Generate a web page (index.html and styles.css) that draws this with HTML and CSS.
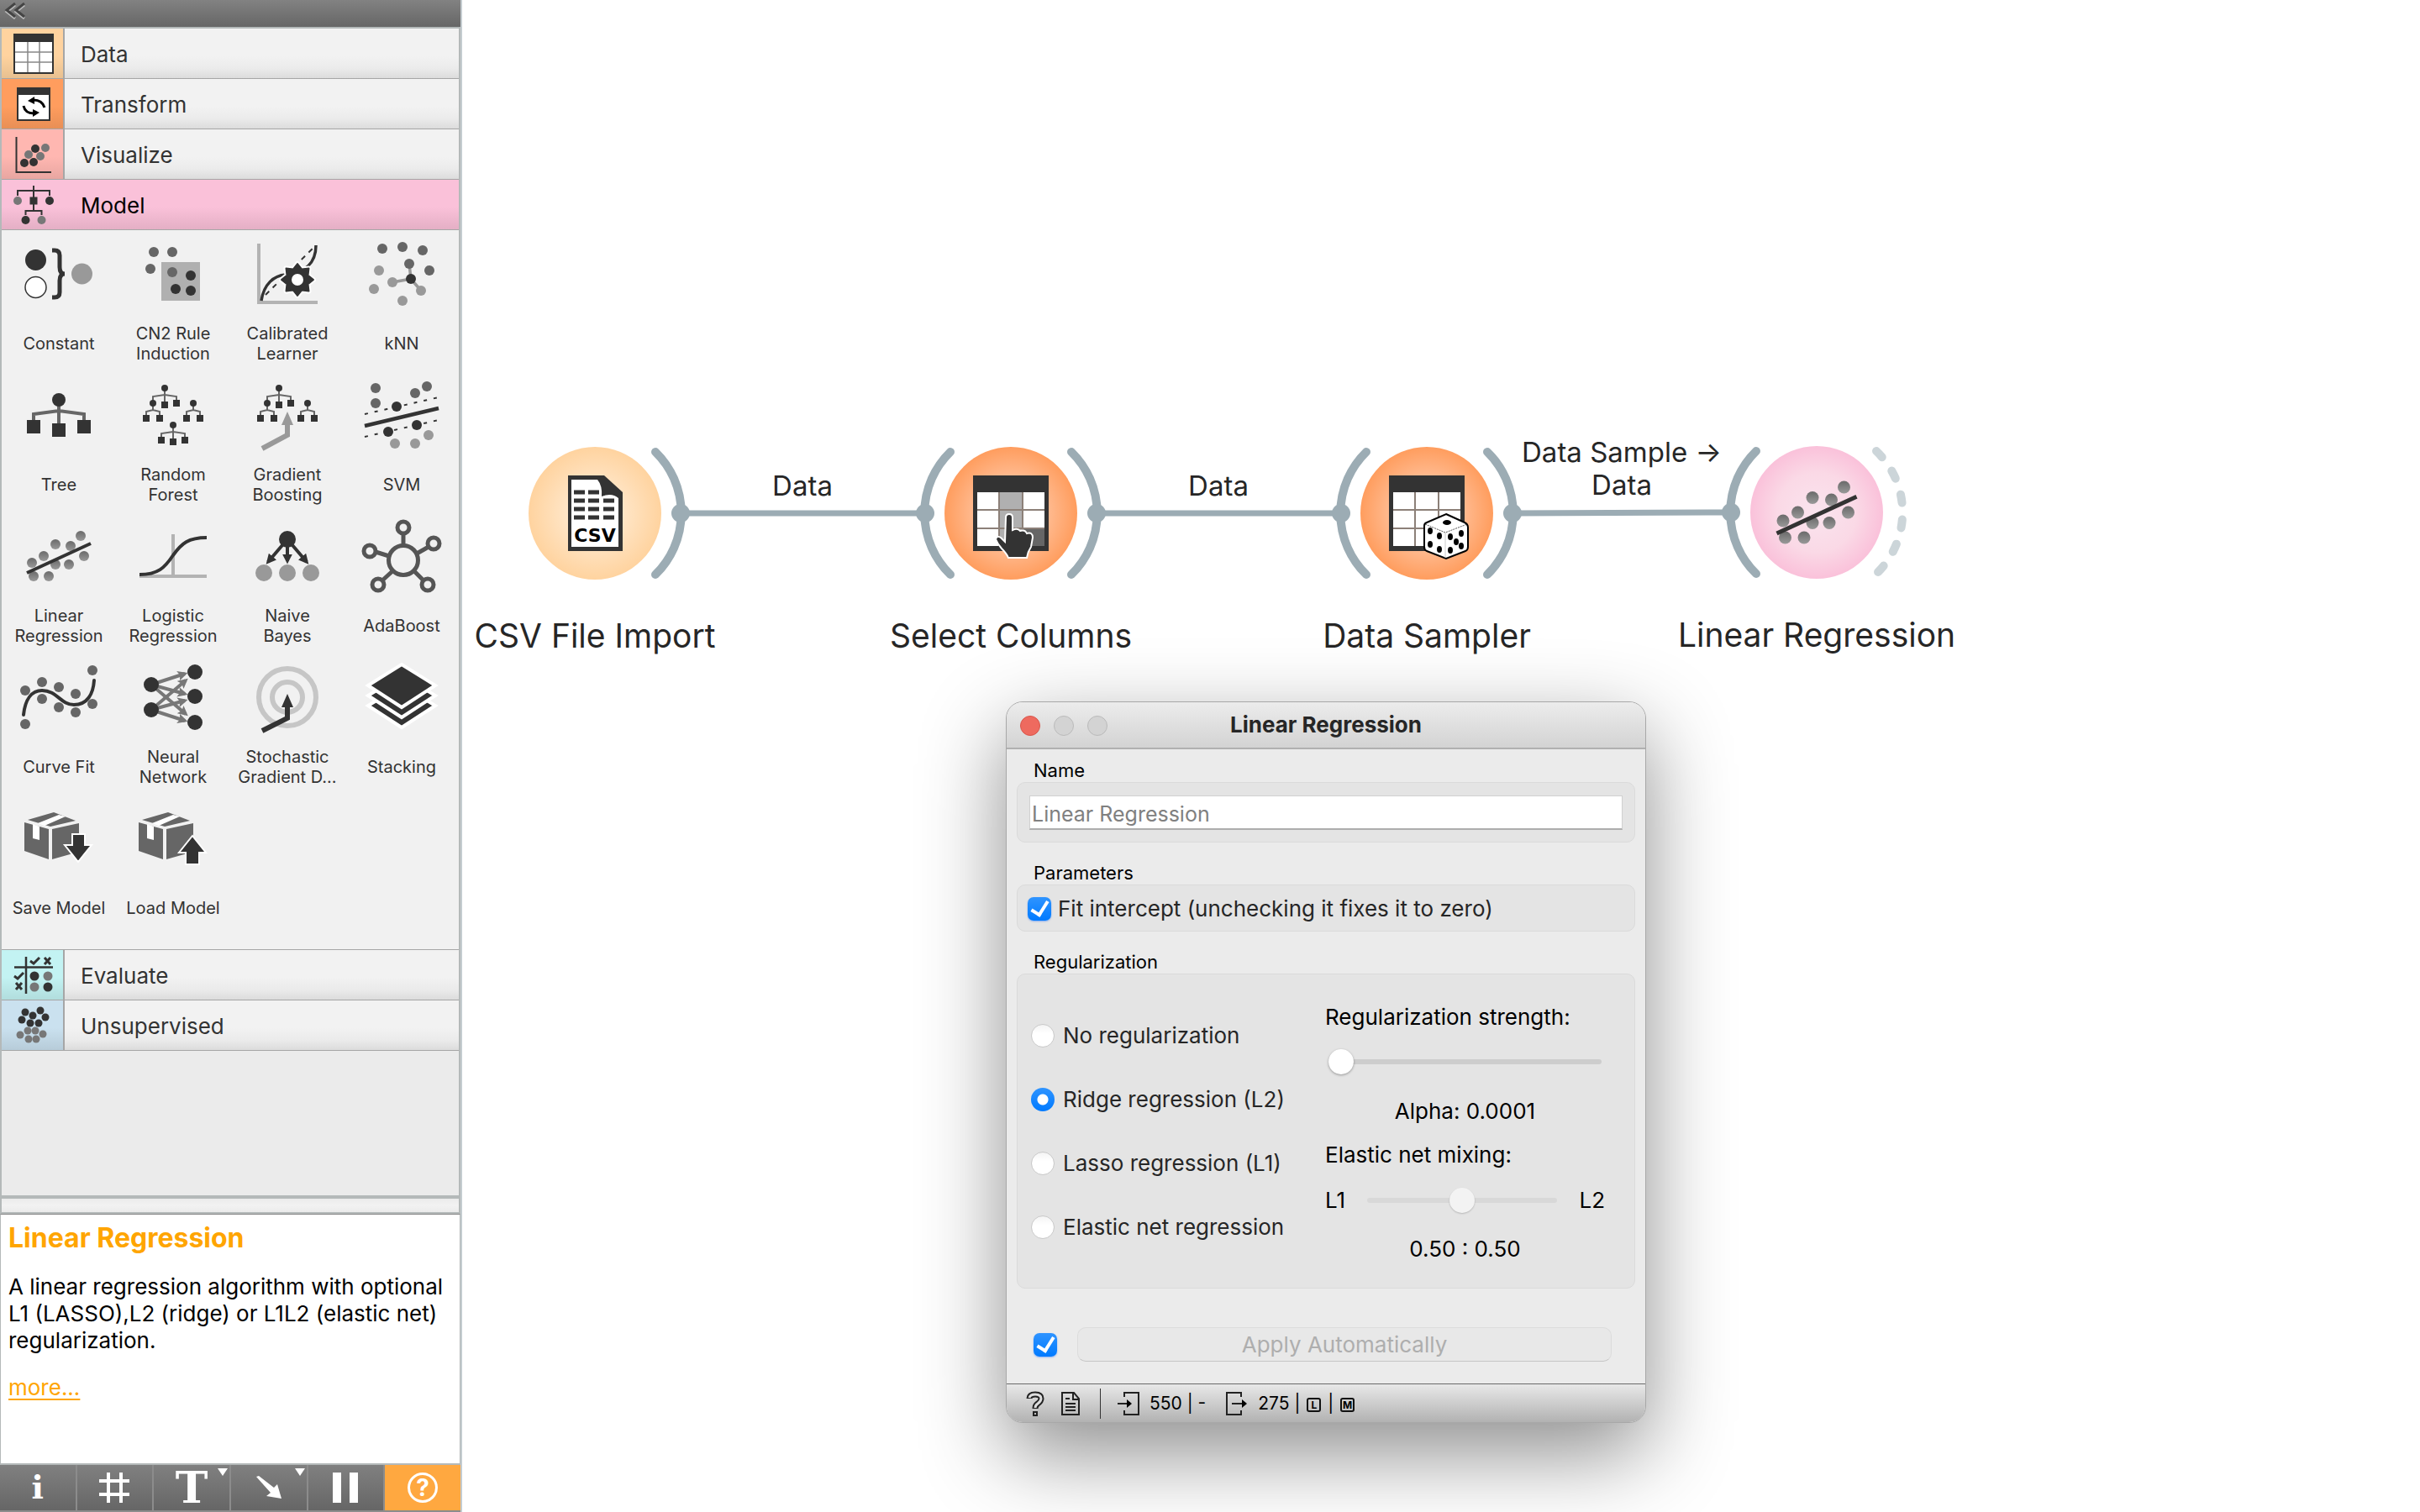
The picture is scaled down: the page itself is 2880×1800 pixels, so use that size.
FILE: index.html
```html
<!doctype html>
<html lang="en">

<head>
  <meta charset="UTF-8" />
  <meta name="viewport" content="width=device-width, initial-scale=1.0" />
  <title>Linear Regression</title>
  <link rel="stylesheet" href="styles.css">
</head>

<body>
  <!-- shared shapes -->
  <svg class="defs" width="0" height="0" aria-hidden="true">
    <defs>
      <linearGradient id="dotGrad" x1="0" y1="0" x2="0" y2="1">
        <stop offset="0" stop-color="#6a6a6a" />
        <stop offset="1" stop-color="#999" />
      </linearGradient>
      <radialGradient id="gradData">
        <stop offset="0" stop-color="#ffeedb" />
        <stop offset="0.4" stop-color="#ffe6c8" />
        <stop offset="1" stop-color="#ffd39f" />
      </radialGradient>
      <radialGradient id="gradTransform">
        <stop offset="0" stop-color="#ffd4b8" />
        <stop offset="0.5" stop-color="#ffbe96" />
        <stop offset="1" stop-color="#ff9d5e" />
      </radialGradient>
      <radialGradient id="gradModel">
        <stop offset="0" stop-color="#fae4ee" />
        <stop offset="0.6" stop-color="#fad9e6" />
        <stop offset="1" stop-color="#fac1da" />
      </radialGradient>
      <marker id="headDark" viewBox="0 0 10 10" refX="7" refY="5" markerWidth="3" markerHeight="3" orient="auto">
        <path d="M0 0L10 5L0 10z" fill="#333" />
      </marker>
      <marker id="headGray" viewBox="0 0 10 10" refX="7" refY="5" markerWidth="3" markerHeight="3" orient="auto">
        <path d="M0 0L10 5L0 10L2 5z" fill="#777" />
      </marker>
      <symbol id="linreg" viewBox="0 0 96 96">
        <g fill="url(#dotGrad)">
          <circle cx="16" cy="56" r="6" /><circle cx="30" cy="48" r="6" /><circle cx="44" cy="34" r="6" />
          <circle cx="62" cy="36" r="6" /><circle cx="74" cy="24" r="6" /><circle cx="78" cy="48" r="6" />
          <circle cx="60" cy="58" r="6" /><circle cx="44" cy="58" r="6" /><circle cx="18" cy="72" r="6" />
          <circle cx="36" cy="72" r="6" />
        </g>
        <path d="M10 68L86 33" stroke="#333" stroke-width="4" />
      </symbol>
      <symbol id="trees" viewBox="0 0 96 96">
        <path d="M38 16V36M24 34V26L38 24L52 26V34M24 34V42M16 50V44L24 42L32 44V50M72 34V42M64 50V44L72 42L80 44V50" fill="none" stroke="#666" stroke-width="2" />
        <g fill="#333">
          <circle cx="38" cy="16" r="4" /><circle cx="24" cy="34" r="4" /><circle cx="72" cy="34" r="4" />
          <path d="M34 32h8v8h-8zM48 30h8v8h-8zM12 48h8v8h-8zM28 48h8v8h-8zM60 48h8v8h-8zM76 48h8v8h-8z" />
        </g>
      </symbol>
      <symbol id="box" viewBox="0 0 96 96">
        <path d="M11 26L42 17L68 27L38 34zM7 29L36 37V73L7 63zM40 37L72 30V64L40 73z" fill="#666" />
        <path d="M23 30L48 20L56 22L31 33zM17 31L25 34V50L17 48z" fill="#fff" />
      </symbol>
      <symbol id="table" viewBox="0 0 90 90">
        <path d="M0 0h90v90H0z" fill="#333" />
        <path d="M5 20h80v64H5z" fill="#fff" />
      </symbol>
    </defs>
  </svg>

  <div class="app">
    <aside class="sidebar">
      <header class="dock-header">
        <button class="collapse" aria-label="Collapse">
          <svg width="28" height="20" viewBox="0 0 28 20" fill="none" stroke-width="3">
            <path d="M13 3L3 11L13 19M24 3L14 11L24 19" stroke="#bbb" />
            <path d="M13 1L3 9L13 17M24 1L14 9L24 17" stroke="#444" />
          </svg>
        </button>
      </header>

      <div class="toolbox">
        <button class="tab">
          <span class="tab-icon tab-data">
            <svg width="48" height="48" viewBox="0 0 48 48">
              <path d="M0 0h48v48H0z" fill="#333" /><path d="M2 10h44v36H2z" fill="#fff" />
              <path d="M17 10V46M31 10V46M2 22H46M2 34H46" stroke="#888" stroke-width="1.5" />
            </svg>
          </span>
          <span class="tab-text">Data</span>
        </button>
        <button class="tab">
          <span class="tab-icon tab-transform">
            <svg width="48" height="48" viewBox="0 0 48 48">
              <path d="M4 4h40v40H4z" fill="#333" /><path d="M6 13h36v29H6z" fill="#fff" />
              <path d="M24 19Q34 19 37 28M24 35Q14 35 12 26" fill="none" stroke="#000" stroke-width="3" />
              <path d="M17 20L25 15V24zM31 34L23 30V39z" />
            </svg>
          </span>
          <span class="tab-text">Transform</span>
        </button>
        <button class="tab">
          <span class="tab-icon tab-visualize">
            <svg width="48" height="48" viewBox="0 0 48 48">
              <path d="M3.500 3V45H45" fill="none" stroke="#333" stroke-width="2" />
              <g fill="#333"><circle cx="26" cy="17" r="5" /><circle cx="13" cy="34" r="5" /><circle cx="24" cy="33" r="5" /></g>
              <g fill="#777"><circle cx="38" cy="16" r="5" /><circle cx="18" cy="24" r="5" /><circle cx="32" cy="26" r="5" /></g>
            </svg>
          </span>
          <span class="tab-text">Visualize</span>
        </button>
        <button class="tab tab-open">
          <span class="tab-icon">
            <svg width="48" height="48" viewBox="0 0 48 48">
              <path d="M5 13V7H43V13M24 1V31M14.500 36V31H33.500V36" fill="none" stroke="#333" stroke-width="2" />
              <path d="M19.500 14.500h9v9h-9z" fill="#333" />
              <circle cx="5" cy="19" r="5" fill="#777" /><circle cx="43" cy="19" r="5" fill="#333" />
              <circle cx="14.500" cy="42" r="5" fill="#333" /><circle cx="33.500" cy="42" r="5" fill="#777" />
            </svg>
          </span>
          <span class="tab-text">Model</span>
        </button>

        <div class="widget-grid">
          <button class="widget">
            <svg class="widget-icon" viewBox="0 0 96 96">
              <circle cx="20.500" cy="31.500" r="12.500" fill="#333" />
              <circle cx="20.500" cy="64" r="12.500" fill="#fff" stroke="#333" stroke-width="1.500" />
              <path d="M40 20h3q6 0 6 6v14q0 8 6 8q-6 0 -6 8v14q0 6 -6 6h-3" fill="none" stroke="#333" stroke-width="5" />
              <circle cx="75.500" cy="48" r="12.500" fill="#999" />
            </svg>
            <span class="widget-name">Constant</span>
          </button>
          <button class="widget">
            <svg class="widget-icon" viewBox="0 0 96 96">
              <path d="M34 34h46v46H34z" fill="#b0b0b0" />
              <g fill="#666"><circle cx="25" cy="22" r="6" /><circle cx="47" cy="22" r="6" /><circle cx="21" cy="42" r="6" /><circle cx="47" cy="46" r="6" /></g>
              <g fill="#333"><circle cx="69" cy="50" r="6" /><circle cx="51" cy="66" r="6" /><circle cx="69" cy="68" r="6" /></g>
            </svg>
            <span class="widget-name">CN2 Rule Induction</span>
          </button>
          <button class="widget">
            <svg class="widget-icon" viewBox="0 0 96 96" fill="none">
              <path d="M14 12V82H84" stroke="#b3b3b3" stroke-width="4" />
              <path d="M22 73L81 15" stroke="#333" stroke-width="2" stroke-dasharray="6 6" />
              <path d="M17 80C20 60 32 50 46 49C68 47 82 36 82 14" stroke="#333" stroke-width="3.500" />
              <path transform="translate(60 55)" d="M0 -19L5.200 -12.500L13.500 -13.500L12.500 -5.200L19 0L12.500 5.200L13.500 13.500L5.200 12.500L0 19L-5.200 12.500L-13.500 13.500L-12.500 5.200L-19 0L-12.500 -5.200L-13.500 -13.500L-5.200 -12.500z" stroke="#fff" stroke-width="6" stroke-linejoin="round" />
              <path transform="translate(60 55)" d="M0 -19L5.200 -12.500L13.500 -13.500L12.500 -5.200L19 0L12.500 5.200L13.500 13.500L5.200 12.500L0 19L-5.200 12.500L-13.500 13.500L-12.500 5.200L-19 0L-12.500 -5.200L-13.500 -13.500L-5.200 -12.500z" fill="#333" stroke="#333" stroke-width="2" stroke-linejoin="round" />
              <circle cx="60" cy="55" r="7" fill="#fff" />
            </svg>
            <span class="widget-name">Calibrated Learner</span>
          </button>
          <button class="widget">
            <svg class="widget-icon" viewBox="0 0 96 96">
              <path d="M57 36L59 54L37 58M59 54L71 68" fill="none" stroke="#999" stroke-width="3.500" />
              <g fill="#666"><circle cx="25" cy="18" r="6" /><circle cx="49" cy="16" r="6" /><circle cx="73" cy="20" r="6" /><circle cx="57" cy="36" r="6" /><circle cx="81" cy="44" r="6" /></g>
              <g fill="#999"><circle cx="21" cy="44" r="6" /><circle cx="37" cy="58" r="6" /><circle cx="15" cy="66" r="6" /><circle cx="71" cy="68" r="6" /><circle cx="49" cy="80" r="6" /></g>
              <circle cx="59" cy="54" r="6" fill="#333" />
            </svg>
            <span class="widget-name">kNN</span>
          </button>

          <button class="widget">
            <svg class="widget-icon" viewBox="0 0 96 96">
              <path d="M48 30V60M18 56V47L48 43L78 47V56" fill="none" stroke="#666" stroke-width="4" />
              <g fill="#333"><circle cx="48" cy="30" r="8" /><path d="M10 54h16v16H10zM40 58h16v16H40zM70 54h16v16H70z" /></g>
            </svg>
            <span class="widget-name">Tree</span>
          </button>
          <button class="widget">
            <svg class="widget-icon" viewBox="0 0 96 96">
              <use href="#trees" />
              <path d="M48 60V80M34 78V70L48 68L62 70V78" fill="none" stroke="#666" stroke-width="2" />
              <g fill="#333"><circle cx="48" cy="60" r="4" /><path d="M30 74h8v8h-8zM44 76h8v8h-8zM58 74h8v8h-8z" /></g>
            </svg>
            <span class="widget-name">Random Forest</span>
          </button>
          <button class="widget">
            <svg class="widget-icon" viewBox="0 0 96 96">
              <use href="#trees" />
              <path d="M18 88L48 72V57" fill="none" stroke="#999" stroke-width="6" />
              <path d="M48 44L55 60H41z" fill="#999" />
            </svg>
            <span class="widget-name">Gradient Boosting</span>
          </button>
          <button class="widget">
            <svg class="widget-icon" viewBox="0 0 96 96">
              <path d="M4 47L92 27M4 74L92 54" stroke="#333" stroke-width="2" stroke-dasharray="4 8" />
              <path d="M4 61L92 40" stroke="#333" stroke-width="4.500" />
              <g fill="#666"><circle cx="17" cy="16" r="6" /><circle cx="17" cy="34" r="6" /><circle cx="64" cy="22" r="6" /><circle cx="78" cy="14" r="6" /></g>
              <g fill="#333"><circle cx="42" cy="38" r="6" /><circle cx="66" cy="60" r="6" /><circle cx="32" cy="68" r="6" /></g>
              <g fill="#999"><circle cx="40" cy="82" r="6" /><circle cx="64" cy="82" r="6" /><circle cx="80" cy="72" r="6" /></g>
            </svg>
            <span class="widget-name">SVM</span>
          </button>

          <button class="widget">
            <svg class="widget-icon" viewBox="0 0 96 96"><use href="#linreg" /></svg>
            <span class="widget-name">Linear Regression</span>
          </button>
          <button class="widget">
            <svg class="widget-icon" viewBox="0 0 96 96" fill="none" stroke-width="4">
              <path d="M8 72H88M48 22V72" stroke="#b3b3b3" />
              <path d="M8 70C30 70 38 62 48 47C58 33 66 26 88 26" stroke="#333" />
            </svg>
            <span class="widget-name">Logistic Regression</span>
          </button>
          <button class="widget">
            <svg class="widget-icon" viewBox="0 0 96 96">
              <g stroke="#333" stroke-width="4">
                <path d="M48 28L25 55" marker-end="url(#headDark)" /><path d="M48 28V54" marker-end="url(#headDark)" /><path d="M48 28L71 55" marker-end="url(#headDark)" />
              </g>
              <circle cx="48" cy="28" r="10" fill="#333" />
              <g fill="#999"><circle cx="20" cy="68" r="10" /><circle cx="48" cy="68" r="10" /><circle cx="76" cy="68" r="10" /></g>
            </svg>
            <span class="widget-name">Naive<br>Bayes</span>
          </button>
          <button class="widget">
            <svg class="widget-icon" viewBox="0 0 96 96" fill="none" stroke="#555" stroke-width="5">
              <circle cx="50" cy="53" r="17.500" />
              <circle cx="50" cy="14" r="7" /><circle cx="86" cy="33" r="7" /><circle cx="10" cy="42" r="7" /><circle cx="20" cy="82" r="7" /><circle cx="79" cy="82" r="7" />
              <path d="M50 21V36M80 37L66 45M17 43L33 48M25 77L37 66M74 77L63 66" />
            </svg>
            <span class="widget-name">AdaBoost</span>
          </button>

          <button class="widget">
            <svg class="widget-icon" viewBox="0 0 96 96">
              <g fill="#666">
                <circle cx="8" cy="40" r="6" /><circle cx="28" cy="30" r="6" /><circle cx="28" cy="50" r="6" /><circle cx="48" cy="36" r="6" /><circle cx="48" cy="60" r="6" />
                <circle cx="68" cy="44" r="6" /><circle cx="68" cy="66" r="6" /><circle cx="88" cy="16" r="6" /><circle cx="88" cy="56" r="6" /><circle cx="8" cy="80" r="6" />
              </g>
              <path d="M6 69C8 50 16 40 28 40C46 40 50 57 66 57C82 57 89 44 90 28" fill="none" stroke="#333" stroke-width="4" stroke-linecap="round" />
            </svg>
            <span class="widget-name">Curve Fit</span>
          </button>
          <button class="widget">
            <svg class="widget-icon" viewBox="0 0 96 96">
              <g stroke="#777" stroke-width="4">
                <path d="M22 33L62 20" marker-end="url(#headGray)" /><path d="M22 33L62 44" marker-end="url(#headGray)" /><path d="M22 33L63 68" marker-end="url(#headGray)" />
                <path d="M22 63L63 28" marker-end="url(#headGray)" /><path d="M22 63L62 52" marker-end="url(#headGray)" /><path d="M22 63L62 76" marker-end="url(#headGray)" />
              </g>
              <g fill="#333"><circle cx="22" cy="33" r="9" /><circle cx="22" cy="63" r="9" /><circle cx="74" cy="18" r="9" /><circle cx="74" cy="47" r="9" /><circle cx="74" cy="78" r="9" /></g>
            </svg>
            <span class="widget-name">Neural Network</span>
          </button>
          <button class="widget">
            <svg class="widget-icon" viewBox="0 0 96 96" fill="none">
              <circle cx="48" cy="48" r="34" stroke="#c6c6c6" stroke-width="6" /><circle cx="48" cy="48" r="18" stroke="#c6c6c6" stroke-width="6" />
              <path d="M18 88L48 73V57" stroke="#333" stroke-width="6" />
              <path d="M48 44L55 60H41z" fill="#333" />
            </svg>
            <span class="widget-name">Stochastic Gradient D...</span>
          </button>
          <button class="widget">
            <svg class="widget-icon" viewBox="0 0 96 96" fill="#333" stroke="#fff" stroke-width="4">
              <path d="M48 34L88 58L48 84L8 58z" /><path d="M48 22L88 46L48 72L8 46z" /><path d="M48 9L88 34L48 60L8 34z" />
            </svg>
            <span class="widget-name">Stacking</span>
          </button>

          <button class="widget">
            <svg class="widget-icon" viewBox="0 0 96 96">
              <use href="#box" />
              <path d="M64 43H79V56H87L71 76L55 56H64z" fill="#333" stroke="#fff" stroke-width="2" />
            </svg>
            <span class="widget-name">Save Model</span>
          </button>
          <button class="widget">
            <svg class="widget-icon" viewBox="0 0 96 96">
              <use href="#box" />
              <path d="M71 45L87 65H79V79H63V65H55z" fill="#333" stroke="#fff" stroke-width="2" />
            </svg>
            <span class="widget-name">Load Model</span>
          </button>
        </div>

        <button class="tab">
          <span class="tab-icon tab-evaluate">
            <svg width="48" height="48" viewBox="0 0 48 48">
              <path d="M15 2V46M1 14.500H47" stroke="#333" stroke-width="2.500" />
              <path d="M20 7L24 10L31 3M1 25L5 28L12 21M37 3L44 11M44 3L37 11M3 33L10 41M10 33L3 41" fill="none" stroke="#333" stroke-width="3" />
              <g fill="#333"><circle cx="25" cy="25" r="5.500" /><circle cx="41" cy="38" r="5.500" /></g>
              <g fill="#777"><circle cx="41" cy="25" r="5.500" /><circle cx="25" cy="38" r="5.500" /></g>
            </svg>
          </span>
          <span class="tab-text">Evaluate</span>
        </button>
        <button class="tab">
          <span class="tab-icon tab-unsupervised">
            <svg width="48" height="48" viewBox="0 0 48 48">
              <g fill="#333"><circle cx="14" cy="8" r="4.500" /><circle cx="23" cy="12" r="4.500" /><circle cx="32" cy="6" r="4.500" /><circle cx="38" cy="14" r="4.500" /><circle cx="10" cy="17" r="4.500" /><circle cx="20" cy="21" r="4.500" /><circle cx="30" cy="21" r="4.500" /></g>
              <g fill="#777"><circle cx="17" cy="30" r="4.500" /><circle cx="26" cy="30" r="4.500" /><circle cx="35" cy="34" r="4.500" /><circle cx="8" cy="35" r="4.500" /><circle cx="18" cy="40" r="4.500" /><circle cx="27" cy="40" r="4.500" /></g>
            </svg>
          </span>
          <span class="tab-text">Unsupervised</span>
        </button>
      </div>

      <div class="splitter"></div>

      <section class="help">
        <h2>Linear Regression</h2>
        <p>A linear regression algorithm with optional L1 (LASSO),L2 (ridge) or L1L2 (elastic net) regularization.</p>
        <a href="#more">more...</a>
      </section>

      <nav class="dock-tools">
        <button class="tool tool-info">i</button>
        <button class="tool" aria-label="Snap to grid">
          <svg width="36" height="36" viewBox="0 0 36 36" stroke="#fff" stroke-width="4"><path d="M11 0V36M26 0V36M0 10H36M0 26H36" /></svg>
        </button>
        <button class="tool tool-type">T<svg class="drop" width="12" height="9" viewBox="0 0 12 9"><path d="M0 0H12L6 9z" fill="#fff" /></svg></button>
        <button class="tool" aria-label="Arrow annotation">
          <svg width="30" height="28" viewBox="0 0 30 28"><path d="M0 1L3 0L21 14L25 10L30 27L12 24L17 20z" fill="#fff" /></svg>
          <svg class="drop" width="12" height="9" viewBox="0 0 12 9"><path d="M0 0H12L6 9z" fill="#fff" /></svg>
        </button>
        <button class="tool" aria-label="Pause">
          <svg width="30" height="36" viewBox="0 0 30 36"><path d="M0 0h10v36H0zM20 0h10v36H20z" fill="#fff" /></svg>
        </button>
        <button class="tool tool-help"><span class="ring">?</span></button>
      </nav>
    </aside>

    <main class="canvas">
      <svg class="links" width="1700" height="1000" stroke="#9cacb4" stroke-width="7">
        <path d="M260 611H551M755 611H1046M1250 611L1510 610" />
      </svg>
      <span class="link-label link-a">Data</span>
      <span class="link-label link-b">Data</span>
      <span class="link-label link-c">Data Sample →<br>Data</span>

      <div class="node node-csv">
        <svg width="240" height="180" viewBox="-120 -90 240 180">
          <circle r="79" fill="url(#gradData)" />
          <g class="anchor"><path d="M72 -73A102 102 0 0 1 72 73" /><circle cx="102" r="11" /></g>
          <path d="M-32 -45H11L33 -25V45H-32z" fill="#333" />
          <path d="M-28 -40H3Q9 -33 8 -20Q20 -25 28 -18V40H-28z" fill="#fff" />
          <path d="M-25 -25H-12M-8 -25H5M-25 -15H-12M-8 -15H5M10 -15H23M-25 -5H-12M-8 -5H5M10 -5H23M-25 5H-12M-8 5H5M10 5H23" stroke="#333" stroke-width="5" />
          <text x="0" y="34" class="csv-text">CSV</text>
        </svg>
        <span class="node-name">CSV File Import</span>
      </div>

      <div class="node node-select">
        <svg width="240" height="180" viewBox="-120 -90 240 180">
          <circle r="79" fill="url(#gradTransform)" />
          <g class="anchor">
            <path d="M72 -73A102 102 0 0 1 72 73M-72 -73A102 102 0 0 0 -72 73" />
            <circle cx="102" r="11" /><circle cx="-102" r="11" />
          </g>
          <use href="#table" x="-45" y="-45" width="90" height="90" />
          <path d="M-14 -25h28v64h-28z" fill="#b0b0b0" /><path d="M14 18h26v21H14z" fill="#666" />
          <path d="M-14 -25V39M14 -25V39M-40 -4H40M-40 18H40" stroke="#8c8078" stroke-width="2" />
          <path d="M-6 5Q-6 1 -2 1Q2 1 2 5V20Q8 17 11 21Q17 19 19 24Q26 22 26 29L24 40Q20 46 19 53H-3Q-5 48 -11 42Q-16 36 -18 31Q-17 26 -12 29L-7 34z" fill="#333" stroke="#fff" stroke-width="2" />
        </svg>
        <span class="node-name">Select Columns</span>
      </div>

      <div class="node node-sampler">
        <svg width="240" height="180" viewBox="-120 -90 240 180">
          <circle r="79" fill="url(#gradTransform)" />
          <g class="anchor">
            <path d="M72 -73A102 102 0 0 1 72 73M-72 -73A102 102 0 0 0 -72 73" />
            <circle cx="102" r="11" /><circle cx="-102" r="11" />
          </g>
          <use href="#table" x="-45" y="-45" width="90" height="90" />
          <path d="M-14 -25V39M14 -25V39M-40 -4H40M-40 18H40" stroke="#8c8078" stroke-width="2" />
          <path d="M23 1L45 11Q49 13 49 17V40Q49 44 46 45L23 54L0 45Q-3 44 -3 40V15Q-3 12 0 11z" fill="#fff" stroke="#000" stroke-width="2" />
          <path d="M-2 13L22 23L48 13" fill="none" stroke="#555" stroke-width="1" stroke-dasharray="2 1" /><path d="M22 23V53" stroke="#ccc" />
          <ellipse cx="24" cy="11" rx="5" ry="3" />
          <ellipse cx="4" cy="21" rx="3" ry="4" /><ellipse cx="15" cy="27" rx="3" ry="4" /><ellipse cx="4" cy="37" rx="3" ry="4" /><ellipse cx="15" cy="43" rx="3" ry="4" />
          <ellipse cx="28" cy="28" rx="3" ry="4" /><ellipse cx="41" cy="24" rx="3" ry="4" /><ellipse cx="35" cy="34" rx="3" ry="4" /><ellipse cx="28" cy="44" rx="3" ry="4" /><ellipse cx="41" cy="39" rx="3" ry="4" />
        </svg>
        <span class="node-name">Data Sampler</span>
      </div>

      <div class="node node-linear">
        <svg width="240" height="180" viewBox="-120 -90 240 180">
          <circle r="79" fill="url(#gradModel)" />
          <g class="anchor"><path d="M-72 -73A102 102 0 0 0 -72 73" /><circle cx="-102" r="11" /></g>
          <path d="M71 -73A101 101 0 0 1 71 73" fill="none" stroke="#ccd5d9" stroke-width="10" stroke-linecap="round" stroke-dasharray="10 20" />
          <use href="#linreg" x="-60" y="-60" width="120" height="120" />
        </svg>
        <span class="node-name">Linear Regression</span>
      </div>

      <form class="dialog">
        <header class="titlebar">
          <div class="lights"><button type="button" class="light light-close" aria-label="Close"></button><button type="button" class="light" aria-label="Minimize"></button><button type="button" class="light" aria-label="Zoom"></button></div>
          <h1>Linear Regression</h1>
        </header>
        <div class="dialog-body">
          <label class="group-title" for="learnerName">Name</label>
          <div class="group group-name">
            <input type="text" id="learnerName" placeholder="Linear Regression" />
          </div>

          <h3 class="group-title">Parameters</h3>
          <div class="group group-params">
            <input type="checkbox" id="fitIntercept" checked />
            <label for="fitIntercept">Fit intercept (unchecking it fixes it to zero)</label>
          </div>

          <h3 class="group-title">Regularization</h3>
          <div class="group group-reg">
            <div class="radios">
              <div class="radio-row"><input type="radio" name="reg" id="regNone" /><label for="regNone">No regularization</label></div>
              <div class="radio-row"><input type="radio" name="reg" id="regRidge" checked /><label for="regRidge">Ridge regression (L2)</label></div>
              <div class="radio-row"><input type="radio" name="reg" id="regLasso" /><label for="regLasso">Lasso regression (L1)</label></div>
              <div class="radio-row"><input type="radio" name="reg" id="regElastic" /><label for="regElastic">Elastic net regression</label></div>
            </div>
            <div class="strength">
              <label for="alpha">Regularization strength:</label>
              <input type="range" id="alpha" min="0" max="100" value="0" />
              <output class="alpha-value">Alpha: 0.0001</output>
              <label for="mixing">Elastic net mixing:</label>
              <div class="mix-row"><span>L1</span><input type="range" id="mixing" min="0" max="100" value="50" disabled /><span>L2</span></div>
              <output>0.50 : 0.50</output>
            </div>
          </div>

          <div class="apply">
            <input type="checkbox" id="autoApply" aria-label="Apply automatically" checked />
            <button type="button" class="apply-button" disabled>Apply Automatically</button>
          </div>
        </div>
        <footer class="statusbar">
          <svg width="22" height="30" viewBox="0 0 22 30" fill="none">
            <path d="M4 9Q4 4 11 4Q18 4 18 9Q18 12 14 15Q11 17 11 21" stroke="#222" stroke-width="7" />
            <path d="M4 8Q5 4 11 4Q18 4 18 9Q18 12 14 15Q11 17 11 20" stroke="#ddd" stroke-width="3" />
            <path d="M9 25h4v4H9z" stroke="#222" stroke-width="2" />
          </svg>
          <svg class="report" width="22" height="28" viewBox="0 0 22 28" fill="none" stroke="#222" stroke-width="2">
            <path d="M1 1H15L21 8V27H1zM14 1V9H21M5 8H10M5 14H17M5 18H17M5 22H17" />
          </svg>
          <span class="rule"></span>
          <svg width="26" height="28" viewBox="0 0 26 28" fill="none" stroke="#222" stroke-width="2">
            <path d="M8 6V1H25V27H8V22M0 14H12" /><path d="M11 9L17 14L11 19z" fill="#000" stroke="none" />
          </svg>
          <span class="status-text">550 | -</span>
          <svg class="out" width="26" height="28" viewBox="0 0 26 28" fill="none" stroke="#222" stroke-width="2">
            <path d="M18 6V1H1V27H18V22M7 14H20" /><path d="M19 9L25 14L19 19z" fill="#000" stroke="none" />
          </svg>
          <span class="status-text">275 | <span class="key">L</span> | <span class="key">M</span></span>
        </footer>
      </form>
    </main>
  </div>
</body>

</html>
```
FILE: styles.css
```css
* {
  box-sizing: border-box;
}

body {
  margin: 0;
  background-color: #fff;
  font-family: 'Inter', 'Liberation Sans', sans-serif;
  font-size: 26px;
  line-height: 32px;
  color: #000;
}

button {
  margin: 0;
  padding: 0;
  border: none;
  background: none;
  font: inherit;
  color: inherit;
}

.defs {
  position: absolute;
}

.app {
  display: flex;
  height: 100vh;
}

/* left dock */
.sidebar {
  display: flex;
  flex-direction: column;
  flex: none;
  width: 550px;
  border-right: 2px solid #c4ccd0;
}

.dock-header {
  height: 32px;
  background: linear-gradient(#828282, #666);
}

.collapse {
  display: block;
  padding: 3px 5px;
}

.collapse svg {
  display: block;
}

.toolbox {
  display: flex;
  flex-direction: column;
  flex: 1;
  border: 2px solid #b4b9b9;
  border-bottom-width: 4px;
  background-color: #ebebeb;
}

.tab {
  display: flex;
  height: 60px;
  border-bottom: 1px solid #a6a6a6;
  background: linear-gradient(#f2f2f2 55%, #ebebeb 80%, #dcdcdc);
  color: #333;
  text-align: left;
}

.tab-icon {
  display: flex;
  align-items: center;
  justify-content: center;
  width: 75px;
  height: 100%;
  padding: 1px 0 0 2px;
  border-right: 2px solid #a6a6a6;
}

.tab-text {
  padding-left: 19px;
  line-height: 62px;
}

.tab-data {
  background: linear-gradient(#ffd39f 55%, #e8c090);
}

.tab-transform {
  background: linear-gradient(#ff9d5e 55%, #e88f56);
}

.tab-visualize {
  background: linear-gradient(#ffb7b1 55%, #e8a6a1);
}

.tab-evaluate {
  background: linear-gradient(#c3f3f3 55%, #b1dddd);
}

.tab-unsupervised {
  background: linear-gradient(#cae1ef 55%, #b7ccd9);
}

.tab-open {
  background: linear-gradient(#fac1d9 55%, #e4afc5);
  color: #000;
}

.tab-open .tab-icon {
  border-color: transparent;
}

.widget-grid {
  display: grid;
  grid-template-columns: repeat(4, 1fr);
  grid-auto-rows: 168px;
  padding-bottom: 16px;
  border-bottom: 1px solid #a6a6a6;
  background-color: #f1f1f1;
}

.widget {
  display: flex;
  flex-direction: column;
  align-items: center;
  padding-top: 4px;
  color: #333;
  font-size: 20px;
  line-height: 24px;
}

.widget-icon {
  width: 96px;
  height: 96px;
}

.widget-name {
  display: flex;
  flex-direction: column;
  justify-content: center;
  width: 128px;
  height: 48px;
  margin-top: 11px;
}

.splitter {
  height: 18px;
  border: 2px solid #b4b9b9;
  border-top: none;
  background: linear-gradient(#ebebeb, #f2f2f2, #ebebeb);
}

.help {
  height: 299px;
  padding: 8px 9px 0;
  border: 1px solid #b4b9b9;
  border-top: 1px solid #888;
  border-bottom-width: 2px;
  background-color: #fff;
}

.help h2 {
  margin: 0 0 22px;
  color: #ffa500;
  font-size: 32px;
  line-height: 40px;
}

.help p {
  margin: 0 0 24px;
}

.help a {
  color: #ffa500;
  text-underline-offset: 4px;
}

.dock-tools {
  display: grid;
  grid-template-columns: repeat(6, 1fr);
  gap: 2px;
  height: 56px;
  padding-bottom: 2px;
  background-color: #8c8c8c;
}

.tool {
  position: relative;
  display: flex;
  align-items: center;
  justify-content: center;
  background: linear-gradient(#808080, #666);
  color: #fff;
}

.tool-info,
.tool-type {
  font-family: 'DejaVu Serif', serif;
  font-weight: bold;
  font-size: 38px;
}

.tool-type {
  font-size: 52px;
}

.tool-help {
  background: #ffa840;
}

.ring {
  width: 36px;
  height: 36px;
  border: 3px solid #fff;
  border-radius: 50%;
  font-size: 28px;
  font-weight: bold;
  line-height: 30px;
}

.drop {
  position: absolute;
  top: 4px;
  right: 2px;
}

/* workflow canvas */
.canvas {
  position: relative;
  flex: 1;
  overflow: hidden;
}

.links {
  position: absolute;
  top: 0;
  left: 0;
}

.link-label {
  position: absolute;
  width: 300px;
  color: #262626;
  font-size: 33px;
  line-height: 39px;
  text-align: center;
}

.link-a {
  left: 255px;
  top: 559px;
}

.link-b {
  left: 750px;
  top: 559px;
}

.link-c {
  left: 1230px;
  top: 519px;
}

.node {
  position: absolute;
  top: 521px;
  display: flex;
  flex-direction: column;
  align-items: center;
  gap: 32px;
  width: 360px;
}

.node-csv {
  left: -22px;
}

.node-select {
  left: 473px;
}

.node-sampler {
  left: 968px;
}

.node-linear {
  left: 1432px;
  top: 520px;
}

.node-name {
  color: #262626;
  font-size: 39px;
  line-height: 48px;
  white-space: nowrap;
}

.anchor path {
  fill: none;
  stroke: #9cacb4;
  stroke-width: 10;
  stroke-linecap: round;
}

.anchor circle {
  fill: #9cacb4;
}

.csv-text {
  font-family: 'DejaVu Sans', sans-serif;
  font-size: 22px;
  font-weight: bold;
  text-anchor: middle;
}

/* dialog */
.dialog {
  position: absolute;
  left: 647px;
  top: 835px;
  width: 762px;
  border: 1px solid #a8a8a8;
  border-radius: 20px;
  background-color: #ebebeb;
  box-shadow: 0 36px 100px rgba(0, 0, 0, 0.45);
  overflow: hidden;
}

.titlebar {
  position: relative;
  height: 56px;
  border-bottom: 2px solid #b0b0b0;
  background: linear-gradient(#ececec, #d3d3d3);
}

.titlebar h1 {
  margin: 0;
  color: #262626;
  font-size: 26px;
  line-height: 54px;
  text-align: center;
}

.lights {
  position: absolute;
  top: 16px;
  left: 16px;
  display: flex;
  gap: 16px;
}

.light {
  width: 24px;
  height: 24px;
  border: 1px solid #bababa;
  border-radius: 50%;
  background-color: #d3d3d3;
}

.light-close {
  border-color: #d8564b;
  background-color: #ee6a5f;
}

.dialog-body {
  padding: 11px 12px 26px;
}

.group-title {
  display: block;
  margin: 0;
  padding-left: 20px;
  font-size: 22px;
  font-weight: normal;
  line-height: 28px;
}

.group {
  margin-bottom: 22px;
  border: 1px solid #dadada;
  border-radius: 10px;
  background-color: #e4e4e4;
}

.group label {
  color: #262626;
}

.group-name {
  height: 72px;
  padding: 15px 14px;
}

.group-name input {
  display: block;
  width: 100%;
  height: 41px;
  padding: 4px 2px 0;
  border: 1px solid #d0d0d0;
  border-bottom: 2px solid #adadad;
  background-color: #fff;
  font: inherit;
  font-size: 25px;
}

.group-name input::placeholder {
  color: #808080;
}

.group-params {
  display: flex;
  align-items: center;
  gap: 8px;
  height: 56px;
  padding: 2px 12px 0;
}

input[type='checkbox'],
input[type='radio'] {
  appearance: none;
  flex: none;
  width: 28px;
  height: 28px;
  margin: 0;
}

input[type='checkbox'] {
  display: grid;
  place-items: center;
  border-radius: 7px;
  background: linear-gradient(#2f94ff, #007aff);
  box-shadow: 0 1px 2px rgba(0, 90, 255, 0.4);
}

input[type='checkbox']::before {
  content: '';
  width: 9px;
  height: 17px;
  margin-bottom: 5px;
  border: solid #fff;
  border-width: 0 4px 4px 0;
  transform: rotate(32deg);
}

input[type='radio'] {
  border: 1px solid #c9c9c9;
  border-radius: 50%;
  background: linear-gradient(#f4f4f4, #fff 40%);
}

input[type='radio']:checked {
  border: none;
  background: radial-gradient(circle, #fff 6px, transparent 7px), linear-gradient(#2f94ff, #007aff);
}

.group-reg {
  display: flex;
  justify-content: space-between;
  margin-bottom: 46px;
  padding: 35px 35px 30px 16px;
}

.radio-row {
  display: flex;
  align-items: center;
  gap: 10px;
  height: 76px;
}

.strength {
  display: flex;
  flex-direction: column;
  width: 333px;
}

.strength label {
  color: #000;
}

.strength output {
  text-align: center;
}

input[type='range'] {
  appearance: none;
  width: 100%;
  height: 30px;
  margin: 0;
  background: none;
}

input[type='range']::-webkit-slider-runnable-track {
  height: 6px;
  border-radius: 3px;
  background-color: #cdcdcd;
}

input[type='range']::-webkit-slider-thumb {
  appearance: none;
  width: 30px;
  height: 30px;
  margin-top: -12px;
  border-radius: 50%;
  background-color: #fff;
  box-shadow: 0 1px 3px rgba(0, 0, 0, 0.35);
}

input[type='range']:disabled::-webkit-slider-runnable-track {
  background-color: #d8d8d8;
}

input[type='range']:disabled::-webkit-slider-thumb {
  background-color: #f3f3f3;
  box-shadow: 0 1px 2px rgba(0, 0, 0, 0.2);
}

#alpha {
  width: auto;
  margin: 22px 4px 28px;
}

.alpha-value {
  margin-bottom: 20px;
}

.mix-row {
  display: flex;
  align-items: center;
  gap: 26px;
  margin: 22px 0 26px;
}

.apply {
  display: flex;
  align-items: center;
  gap: 24px;
  padding: 0 28px 0 20px;
}

.apply-button {
  flex: 1;
  height: 41px;
  border: 1px solid #dcdcdc;
  border-bottom-color: #c6c6c6;
  border-radius: 10px;
  background-color: #e8e8e8;
  color: #aeaeae;
}

.statusbar {
  display: flex;
  align-items: center;
  height: 46px;
  padding-left: 23px;
  border-top: 1px solid #6a6a6a;
  background: linear-gradient(#e8e8e8, #b2b2b2);
  font-size: 21px;
}

.report {
  margin-left: 20px;
}

.rule {
  width: 1px;
  height: 36px;
  margin: 0 20px 0 24px;
  background-color: #333;
}

.status-text {
  margin-left: 12px;
}

.out {
  margin-left: 24px;
}

.key {
  display: inline-block;
  width: 17px;
  height: 17px;
  margin: 0 2px;
  border: 2px solid #111;
  border-radius: 3px;
  font-size: 12px;
  font-weight: bold;
  line-height: 13px;
  text-align: center;
  vertical-align: 1px;
}
```
